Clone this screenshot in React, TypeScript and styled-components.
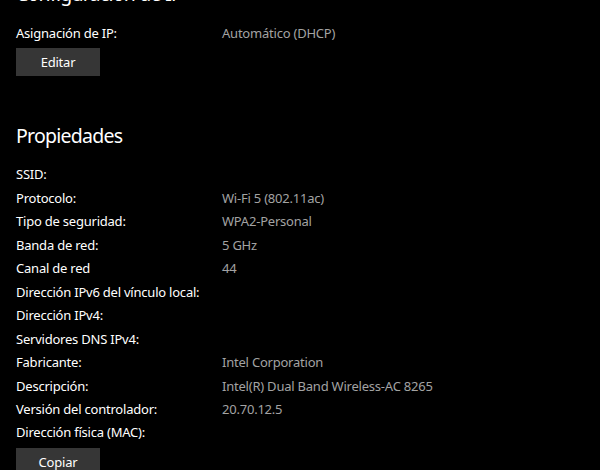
import React from "react"
import styled, { createGlobalStyle } from "styled-components"

const GlobalStyle = createGlobalStyle`
  html, body {
    margin: 0;
    padding: 0;
    background: #000;
    overflow: hidden;
  }
  body {
    font-family: "Noto Sans", "Open Sans", sans-serif;
    color: #fff;
  }
`

const Page = styled.div`
  display: flex;
  flex-direction: column;
  align-items: flex-start;
  padding: 0 16px;
  height: 470px;
  overflow: hidden;
`

const SectionTitle = styled.h2<{ $top: number }>`
  margin: ${(p) => p.$top}px 0 0 0;
  font-size: 19.5px;
  font-weight: 400;
  line-height: 28px;
  letter-spacing: -0.75px;
  color: #fff;
`

const List = styled.div<{ $top: number }>`
  display: flex;
  flex-direction: column;
  margin-top: ${(p) => p.$top}px;
  align-self: stretch;
`

const Row = styled.div`
  display: grid;
  grid-template-columns: 206px 1fr;
  font-size: 13px;
  line-height: 23.45px;
  letter-spacing: -0.22px;
`

const Label = styled.span`
  color: #fff;
`

const Value = styled.span`
  color: #a3a3a3;
`

const Button = styled.button`
  margin-top: 3px;
  width: 84px;
  height: 28px;
  border: none;
  background: #363636;
  color: #fff;
  font-family: inherit;
  font-size: 13px;
  letter-spacing: -0.2px;
  padding: 0;
  flex-shrink: 0;
`

const props: [string, string][] = [
  ["SSID:", ""],
  ["Protocolo:", "Wi-Fi 5 (802.11ac)"],
  ["Tipo de seguridad:", "WPA2-Personal"],
  ["Banda de red:", "5 GHz"],
  ["Canal de red", "44"],
  ["Dirección IPv6 del vínculo local:", ""],
  ["Dirección IPv4:", ""],
  ["Servidores DNS IPv4:", ""],
  ["Fabricante:", "Intel Corporation"],
  ["Descripción:", "Intel(R) Dual Band Wireless-AC 8265"],
  ["Versión del controlador:", "20.70.12.5"],
  ["Dirección física (MAC):", ""],
]

export default function App() {
  return (
    <>
      <GlobalStyle />
      <Page>
        <SectionTitle $top={-20}>Configuración de IP</SectionTitle>
        <List $top={14}>
          <Row>
            <Label>Asignación de IP:</Label>
            <Value>Automático (DHCP)</Value>
          </Row>
        </List>
        <Button>Editar</Button>

        <SectionTitle $top={46}>Propiedades</SectionTitle>
        <List $top={13}>
          {props.map(([k, v]) => (
            <Row key={k}>
              <Label>{k}</Label>
              <Value>{v}</Value>
            </Row>
          ))}
        </List>
        <Button>Copiar</Button>
      </Page>
    </>
  )
}
